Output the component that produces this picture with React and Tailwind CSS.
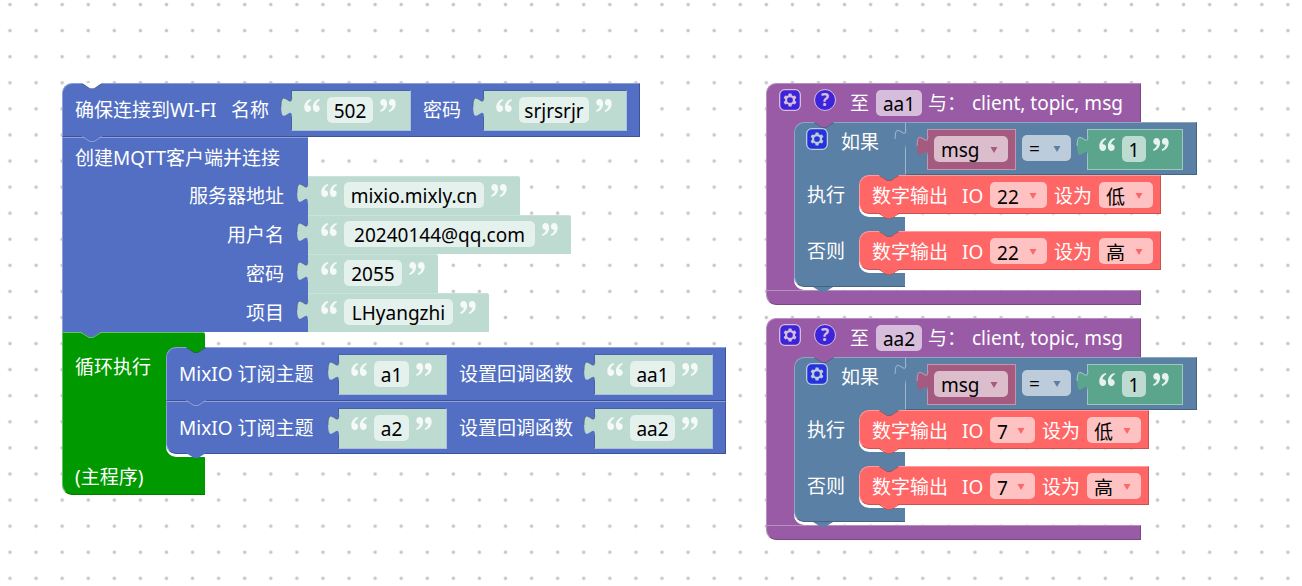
const GEAR_PATH =
  "m4.203,7.296 0,1.368 -0.92,0.677 -0.11,0.41 0.9,1.559 0.41,0.11 1.043,-0.457 1.187,0.683 0.127,1.134 0.3,0.3 1.8,0 0.3,-0.299 0.127,-1.138 1.185,-0.682 1.046,0.458 0.409,-0.11 0.9,-1.559 -0.11,-0.41 -0.92,-0.677 0,-1.366 0.92,-0.677 0.11,-0.41 -0.9,-1.559 -0.409,-0.109 -1.046,0.458 -1.185,-0.682 -0.127,-1.138 -0.3,-0.299 -1.8,0 -0.3,0.3 -0.126,1.135 -1.187,0.682 -1.043,-0.457 -0.41,0.11 -0.899,1.559 0.108,0.409z";

const BLUE = "bg-[#526fc3] border-t-[#8c9fd8] border-l-[#8c9fd8] border-b-[#3c539a] border-r-[#3c539a]";
const RED = "bg-[#ff6666] border-t-[#ff9c9c] border-l-[#ff9c9c] border-b-[#cc5252] border-r-[#cc5252]";

function GridDots() {
  return (
    <svg className="absolute inset-0 h-full w-full" aria-hidden="true">
      <defs>
        <pattern id="dots" width="26.08" height="26.08" x="-3" y="-8.5" patternUnits="userSpaceOnUse">
          <path d="M11.3 13h3.4M13 11.3v3.4" stroke="#c4c4c4" strokeWidth="1.8" />
        </pattern>
      </defs>
      <rect width="100%" height="100%" fill="url(#dots)" />
    </svg>
  );
}

// Dent in the top edge, filled with whatever lies above the block
function Notch({ fill, line = "stroke-black/20" }) {
  return (
    <svg viewBox="0 0 20 6" className="absolute -top-px left-[19px] h-[6px] w-[20px]" aria-hidden="true">
      <path d="M0 0l8 5.5h4L20 0z" className={fill} />
      <path d="M0 .5l8 5h4l8-5" fill="none" className={line} />
    </svg>
  );
}

// Bump below the bottom edge
function Tail({ fill, line = "stroke-transparent" }) {
  return (
    <svg viewBox="0 0 20 6" className="absolute top-full left-[19px] z-10 h-[6px] w-[20px]" aria-hidden="true">
      <path d="M0 0l8 5h4l8-5z" className={fill} />
      <path d="M0 .5l8 5h4l8-5" fill="none" className={line} />
    </svg>
  );
}

function Tab({ fill, line = "stroke-black/15" }) {
  return (
    <svg viewBox="0 0 8 15" className="absolute top-[6px] right-full h-[20px] w-[11px] overflow-visible" aria-hidden="true">
      <path d="M9 0H8C8 10 0 -8 0 7.5S8 5 8 15h1z" className={fill} />
      <path d="M8 0C8 10 0 -8 0 7.5" fill="none" strokeWidth=".8" className={line} />
    </svg>
  );
}

function Quote({ closing = false }) {
  return (
    <svg
      viewBox="0 0 16 13"
      className={closing ? "h-[13px] w-[16px] shrink-0 rotate-180 fill-white/85" : "h-[13px] w-[16px] shrink-0 fill-white/85"}
      aria-hidden="true"
    >
      <path d="M6.900 0C2.900.9.300 4.200.300 8.400c0 2.800 1.400 4.600 3.500 4.600 1.900 0 3.300-1.500 3.300-3.500 0-1.900-1.200-3.200-2.900-3.200-.300 0-.500 0-.7.1.2-2.300 1.600-4 3.700-4.900z" />
      <path d="M15.500 0C11.500.9 8.900 4.200 8.900 8.400c0 2.800 1.400 4.600 3.500 4.600 1.900 0 3.300-1.500 3.300-3.500 0-1.900-1.200-3.200-2.900-3.200-.300 0-.500 0-.7.1.2-2.300 1.600-4 3.700-4.900z" />
    </svg>
  );
}

function TextField({ value, label, width }) {
  return (
    <input
      type="text"
      aria-label={label}
      defaultValue={value}
      className={`${width} h-[26px] rounded-[5px] bg-white/60 pt-px text-center text-black outline-none`}
    />
  );
}

function SelectField({ value, options = [], label, width, arrow }) {
  return (
    <span className="relative flex w-max">
      <select
        aria-label={label}
        defaultValue={value}
        className={`${width} h-[26px] appearance-none rounded-[5px] bg-white/60 pt-px pl-[7px] text-black outline-none`}
      >
        <option>{value}</option>
        {options.map((option) => (
          <option key={option}>{option}</option>
        ))}
      </select>
      <svg viewBox="0 0 8 6" className={`${arrow} pointer-events-none absolute top-[11px] right-[10px] h-[6px] w-[8px]`} aria-hidden="true">
        <path d="M.5 0h7L4 6z" />
      </svg>
    </span>
  );
}

// Quoted string; the pale look marks a default value, the green one a real block
function TextValue({ value, label, width, inline = false, solid = false }) {
  const frame = solid
    ? "h-[41px] border border-[#9cc9ba] bg-[#5ba58c] pr-[13px] pl-[11px] pt-[6px]"
    : inline
      ? "h-[41px] border border-t-[#48619f] border-l-[#48619f] border-r-[#a9bfe0] border-b-[#a9bfe0] bg-[#bddbd1] pr-[14px] pl-[12px] pt-[6px]"
      : "h-[39px] rounded-tr-[2px] border-t border-[#cbe2da] bg-[#bddbd1] px-[13px] pt-[5px]";
  return (
    <div className={`${frame} relative flex shrink-0 items-start gap-[7px]`}>
      <Tab fill={solid ? "fill-[#5ba58c]" : "fill-[#bddbd1]"} line={solid ? "stroke-[#9cc9ba]" : "stroke-black/20"} />
      <span className="pt-[2px]"><Quote /></span>
      <TextField value={value} label={label} width={width} />
      <span className="pt-[2px]"><Quote closing /></span>
    </div>
  );
}

function GearButton() {
  return (
    <button type="button" aria-label="设置" className="h-[22px] w-[22px] shrink-0 opacity-60">
      <svg viewBox="-0.5 -0.5 17 17" className="h-full w-full">
        <rect width="16" height="16" rx="4" fill="#00f" stroke="#fff" />
        <path d={GEAR_PATH} fill="#fff" />
        <circle cx="8" cy="8" r="2.7" fill="#00f" stroke="#fff" />
      </svg>
    </button>
  );
}

function HelpButton() {
  return (
    <button
      type="button"
      className="h-[22px] w-[22px] shrink-0 rounded-full border border-white bg-[#0000ff] text-center text-[17px] leading-[20px] font-bold text-white opacity-60"
    >
      ?
    </button>
  );
}

function SubscribeBlock({ topic, callback, width, callbackWidth, first = false }) {
  return (
    <div className={`${BLUE} ${first ? "h-[54px] rounded-tl-[10px]" : "h-[53px] rounded-bl-[10px]"} relative flex w-[560px] items-start border pt-[6px] pl-[12px] leading-[40px]`}>
      {first && <Notch fill="fill-[#009900]" />}
      <span className="w-[159px]">MixIO 订阅主题</span>
      <TextValue inline value={topic} label="订阅主题" width={width} />
      <span className="w-[147px] pl-[12px]">设置回调函数</span>
      <TextValue inline value={callback} label="回调函数" width={callbackWidth} />
      <Tail fill="fill-[#526fc3]" line={first ? "stroke-[#8c9fd8]" : "stroke-transparent"} />
    </div>
  );
}

function DigitalWrite({ pin, pinWidth, level }) {
  return (
    <div className={`${RED} relative flex h-[39px] items-start rounded-l-[10px] border pt-[6px] pr-[7px] pl-[12px] leading-[28px]`}>
      <Notch fill="fill-[#5b80a5]" />
      <span>数字输出</span>
      <span className="w-[42px] pl-[14px]">IO</span>
      <SelectField value={pin} label="引脚" width={pinWidth} arrow="fill-[#ff6666]" />
      <span className="px-[7px]">设为</span>
      <SelectField value={level} options={[level === "高" ? "低" : "高"]} label="电平" width="w-[54px]" arrow="fill-[#ff6666]" />
      <Tail fill="fill-[#ff6666]" line="stroke-[#cc5252]" />
    </div>
  );
}

function IfBranch({ label, children }) {
  return (
    <div className="flex h-[42px] w-max">
      <div className="w-[65px] border-l border-[#8ca6c0] bg-[#5b80a5] pt-[6px] pl-[12px] leading-[28px]">{label}</div>
      <div className="relative">
        <div className="absolute inset-y-0 left-0 w-[46px] bg-[#5b80a5] pt-[16px]">
          <div className="h-[26px] rounded-bl-[10px] bg-white" />
        </div>
        {children}
      </div>
    </div>
  );
}

function IfBlock({ pin, pinWidth }) {
  return (
    <div className="relative w-max">
      <div className="relative flex h-[53px]">
        <div className="relative flex w-[111px] rounded-tl-[10px] border-t border-l border-[#8ca6c0] bg-[#5b80a5] pt-[5px] pl-[11px]">
          <Notch fill="fill-[#995ba5]" />
          <GearButton />
          <span className="pl-[13px] leading-[28px]">如果</span>
        </div>
        <div className="relative flex w-[292px] items-start border border-t-[#8ca6c0] border-r-[#46637f] border-b-[#46637f] border-l-[#9fb5cb] bg-[#5b80a5] pt-[6px] pl-[21px]">
          <Tab fill="fill-[#5b80a5]" line="stroke-[#9fb5cb]" />
          <div className="relative h-[41px] w-[89px] border border-[#c694ad] bg-[#a55b80] pt-[6px] pl-[6px]">
            <Tab fill="fill-[#a55b80]" line="stroke-[#c694ad]" />
            <SelectField value="msg" options={["client", "topic"]} label="变量" width="w-[74px]" arrow="fill-[#a55b80]" />
          </div>
          <div className="pt-[6px] pr-[16px] pl-[6px]">
            <SelectField value="=" options={["≠", "<", ">"]} label="比较" width="w-[49px]" arrow="fill-[#5b80a5]" />
          </div>
          <TextValue inline solid value="1" label="比较值" width="w-[24px]" />
        </div>
      </div>
      <IfBranch label="执行">
        <DigitalWrite pin={pin} pinWidth={pinWidth} level="低" />
      </IfBranch>
      <div className="h-[14px] w-[111px] border-l border-[#8ca6c0] bg-[#5b80a5]" />
      <IfBranch label="否则">
        <DigitalWrite pin={pin} pinWidth={pinWidth} level="高" />
      </IfBranch>
      <div className="h-[14px] w-[111px] rounded-bl-[10px] border-b border-l border-b-[#46637f] border-l-[#8ca6c0] bg-[#5b80a5]" />
      <Tail fill="fill-[#5b80a5]" />
    </div>
  );
}

function ProcedureBlock({ name, pin, pinWidth }) {
  return (
    <div className="w-max">
      <div className="flex h-[39px] w-[375px] items-start rounded-tl-[10px] border border-b-0 border-t-[#b88dc0] border-r-[#7a4984] border-l-[#b88dc0] bg-[#995ba5] pt-[5px] pl-[12px] leading-[28px]">
        <GearButton />
        <span className="w-[13px]" />
        <HelpButton />
        <span className="w-[40px] pl-[14px]">至</span>
        <span className="flex pt-px"><TextField value={name} label="函数名" width="w-[46px]" /></span>
        <span className="w-[50px] pl-[6px]">与：</span>
        <span>client, topic, msg</span>
      </div>
      <div className="flex">
        <div className="w-[28px] border-l border-[#b88dc0] bg-[#995ba5]" />
        <div className="relative pb-[3px]">
          <div className="absolute inset-y-0 left-0 w-[30px] bg-[#995ba5] pt-[30px]">
            <div className="h-full rounded-bl-[10px] bg-white" />
          </div>
          <IfBlock pin={pin} pinWidth={pinWidth} />
        </div>
      </div>
      <div className="h-[15px] w-[375px] rounded-bl-[10px] border border-t-[#b88dc0] border-r-[#7a4984] border-b-[#7a4984] border-l-[#b88dc0] bg-[#995ba5]" />
    </div>
  );
}

function ServerRow({ title, children }) {
  return (
    <div className="flex h-[39px]">
      <div className="w-[246px] border-l border-[#8c9fd8] bg-[#526fc3] pr-[24px] text-right leading-[40px]">{title}</div>
      {children}
    </div>
  );
}

function MainStack() {
  return (
    <div className="w-max">
      <div className={`${BLUE} relative flex h-[54px] w-[578px] items-start rounded-tl-[10px] border pt-[6px] pl-[12px] leading-[40px]`}>
        <Notch fill="fill-white" />
        <span className="w-[156px]">确保连接到WI-FI</span>
        <span className="w-[60px]">名称</span>
        <TextValue inline value="502" label="名称" width="w-[46px]" />
        <span className="w-[72px] pl-[12px]">密码</span>
        <TextValue inline value="srjrsrjr" label="密码" width="w-[70px]" />
        <Tail fill="fill-[#526fc3]" line="stroke-[#8c9fd8]" />
      </div>
      <div className="relative">
        <div className="h-[39px] w-[246px] border-t border-l border-[#8c9fd8] bg-[#526fc3] pl-[12px] leading-[40px]">
          创建MQTT客户端并连接
        </div>
        <ServerRow title="服务器地址">
          <TextValue value="mixio.mixly.cn" label="服务器地址" width="w-[140px]" />
        </ServerRow>
        <ServerRow title="用户名">
          <TextValue value="20240144@qq.com" label="用户名" width="w-[191px]" />
        </ServerRow>
        <ServerRow title="密码">
          <TextValue value="2055" label="密码" width="w-[58px]" />
        </ServerRow>
        <ServerRow title="项目">
          <TextValue value="LHyangzhi" label="项目" width="w-[109px]" />
        </ServerRow>
        <Tail fill="fill-[#526fc3]" line="stroke-[#66c266]" />
      </div>
      <div>
        <div className="h-[15px] w-[143px] rounded-tr-[2px] border-t border-l border-[#66c266] bg-[#009900]" />
        <div className="flex">
          <div className="w-[104px] border-l border-[#66c266] bg-[#009900] pt-[6px] pl-[12px] leading-[28px]">循环执行</div>
          <div className="relative pb-[3px]">
            <div className="absolute inset-y-0 left-0 w-[39px] bg-[#009900] pt-[70px]">
              <div className="h-full rounded-bl-[10px] bg-white" />
            </div>
            <SubscribeBlock first topic="a1" callback="aa1" width="w-[35px]" callbackWidth="w-[45px]" />
            <SubscribeBlock topic="a2" callback="aa2" width="w-[35px]" callbackWidth="w-[45px]" />
          </div>
        </div>
        <div className="h-[38px] w-[143px] rounded-bl-[10px] border-b border-l border-b-[#007a00] border-l-[#66c266] bg-[#009900] pl-[12px] leading-[40px]">
          (主程序)
        </div>
      </div>
    </div>
  );
}

export default function App() {
  return (
    <main className="relative min-h-screen overflow-hidden bg-white font-['Noto_Sans','Noto_Sans_CJK_SC',sans-serif] text-[19px] leading-[26px] whitespace-nowrap text-white">
      <GridDots />
      <div className="absolute top-[83px] left-[62px]">
        <MainStack />
      </div>
      <div className="absolute top-[83px] left-[766px]">
        <ProcedureBlock name="aa1" pin="22" pinWidth="w-[57px]" />
      </div>
      <div className="absolute top-[318px] left-[766px]">
        <ProcedureBlock name="aa2" pin="7" pinWidth="w-[45px]" />
      </div>
    </main>
  );
}
